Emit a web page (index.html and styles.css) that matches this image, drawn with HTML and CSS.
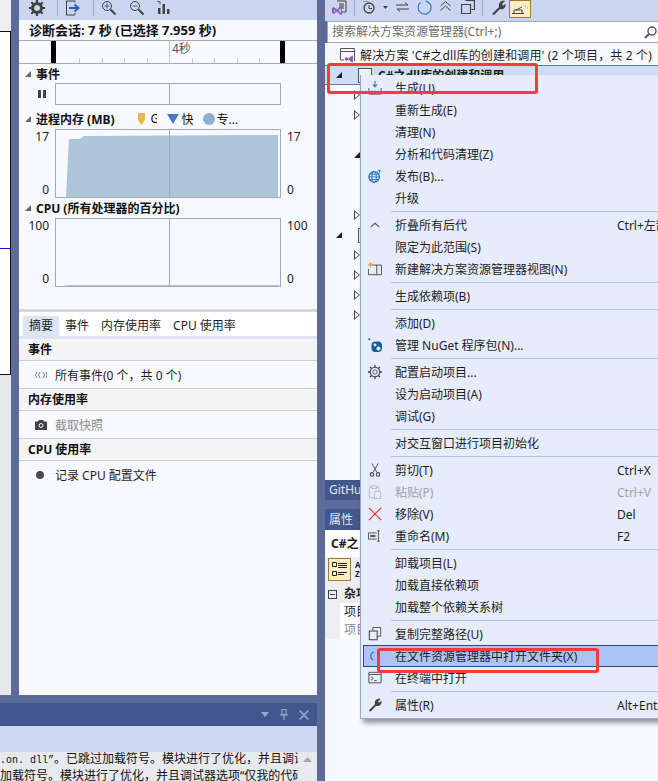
FILE: index.html
```html
<!DOCTYPE html>
<html lang="zh-CN">
<head>
<meta charset="UTF-8">
<meta name="viewport" content="width=device-width, initial-scale=1.0">
<title>解决方案资源管理器</title>
<link rel="stylesheet" href="styles.css">
</head>
<body>
<div class="app">

    <!-- 左侧：诊断工具 + 输出 -->
    <div class="left-col">
        <div class="left-top">
            <div class="doc">
                <div class="doc-tab"></div>
                <div class="doc-page"><div class="doc-mark"></div></div>
                <div class="doc-rest"></div>
            </div>
            <div class="diag">
                <div class="toolbar diag-toolbar">
                    <svg class="ic ic-gear" width="16" height="16" viewBox="0 0 16 16"><circle cx="8" cy="8" r="4.5" fill="none" stroke="#424242" stroke-width="3"/><path d="M8 0v3M8 13v3M0 8h3M13 8h3M2.3 2.3l2 2M11.7 11.7l2 2M2.3 13.7l2-2M11.7 4.3l2-2" stroke="#424242" stroke-width="2.2"/></svg>
                    <span class="tool-sep"></span>
                    <svg class="ic ic-export" width="16" height="16" viewBox="0 0 16 16"><path d="M10 2.5V1H1.500v14H10v-2" fill="none" stroke="#424242"/><path d="M4 8h9M9.500 4.500L13.500 8l-4 3.500" fill="none" stroke="#2f5fb0" stroke-width="2"/></svg>
                    <span class="tool-sep"></span>
                    <svg class="ic ic-zoomin" width="16" height="16" viewBox="0 0 16 16"><circle cx="6" cy="6" r="4.500" fill="none" stroke="#424242"/><path d="M9.500 9.500l5 5" stroke="#424242" stroke-width="2"/><path d="M3.500 6h5M6 3.500v5" stroke="#2f5fb0"/></svg>
                    <svg class="ic ic-zoomout" width="16" height="16" viewBox="0 0 16 16"><circle cx="6" cy="6" r="4.500" fill="none" stroke="#424242"/><path d="M9.500 9.500l5 5" stroke="#424242" stroke-width="2"/><path d="M3.500 6h5" stroke="#2f5fb0"/></svg>
                    <svg class="ic ic-chart" width="16" height="16" viewBox="0 0 16 16"><path d="M2 14V8h2.500v6zM6.500 14V4H9v10zM11 14V9h2.500v5z" fill="#424242"/><path d="M1 1.500h3v3" fill="none" stroke="#2f5fb0"/></svg>
                </div>
                <div class="session">诊断会话: 7 秒 (已选择 7.959 秒)</div>
                <div class="ruler">
                    <span class="ruler-mark ruler-start"></span>
                    <span class="ruler-mid">4秒</span>
                    <span class="ruler-mark ruler-end"></span>
                    <div class="ruler-ticks">
                        <i></i><i></i><i></i><i></i><i></i><i></i><i></i><i></i><i></i>
                    </div>
                </div>

                <div class="graph-head events-head"><span class="tri"></span><span>事件</span></div>
                <div class="graph-row events-row">
                    <div class="axis"><span class="pause"></span></div>
                    <div class="chart"></div>
                </div>

                <div class="graph-head mem-head">
                    <span class="tri"></span><span>进程内存 (MB)</span>
                    <div class="legend">
                        <svg width="7" height="12" viewBox="0 0 7 12"><path d="M0 0h7v7l-3.500 5L0 7z" fill="#eeb64b"/></svg>
                        <span class="legend-g">G</span>
                        <svg width="12" height="10" viewBox="0 0 12 10"><path d="M0 0h12L6 10z" fill="#4a78c0"/></svg>
                        <span class="legend-fast">快</span>
                        <span class="legend-dot"></span>
                        <span>专...</span>
                    </div>
                </div>
                <div class="graph-row tall-row">
                    <div class="axis"><span>17</span><span>0</span></div>
                    <div class="chart">
                        <svg class="chart-fill" width="224" height="67" viewBox="0 0 224 67"><path d="M10 67L13 9H24L28 6L222 5V67Z" fill="#adc4d9"/></svg>
                    </div>
                    <div class="axis axis-right"><span>17</span><span>0</span></div>
                </div>

                <div class="graph-head cpu-head"><span class="tri"></span><span>CPU (所有处理器的百分比)</span></div>
                <div class="graph-row tall-row">
                    <div class="axis"><span>100</span><span>0</span></div>
                    <div class="chart">
                        <svg class="chart-fill" width="224" height="67" viewBox="0 0 224 67"><path d="M10 67V66H223V67Z" fill="#adc4d9"/></svg>
                    </div>
                    <div class="axis axis-right"><span>100</span><span>0</span></div>
                </div>

                <div class="splitter"></div>
                <div class="tabs">
                    <span class="tab tab-on">摘要</span>
                    <span class="tab">事件</span>
                    <span class="tab">内存使用率</span>
                    <span class="tab">CPU 使用率</span>
                </div>
                <div class="sum-head">事件</div>
                <div class="sum-row">
                    <svg class="sum-ic" width="12" height="8" viewBox="0 0 12 8"><path d="M2 1L0.500 4L2 7M5 1L3.500 4L5 7M8 1L9.500 4L8 7M11 1L12 4L11 7" fill="none" stroke="#777"/></svg>
                    <span>所有事件(0 个，共 0 个)</span>
                </div>
                <div class="sum-head">内存使用率</div>
                <div class="sum-row sum-off">
                    <svg class="sum-ic" width="12" height="10" viewBox="0 0 12 10"><path d="M0 1.500h3l1-1.500h4l1 1.500h3V10H0z" fill="#424242"/><circle cx="6" cy="5.500" r="2" fill="none" stroke="#f7f9ff"/></svg>
                    <span>截取快照</span>
                </div>
                <div class="sum-head">CPU 使用率</div>
                <div class="sum-row">
                    <span class="rec-dot"></span>
                    <span>记录 CPU 配置文件</span>
                </div>
            </div>
        </div>

        <!-- 输出窗口 -->
        <div class="output">
            <div class="title-bar">
                <svg width="8" height="5" viewBox="0 0 8 5"><path d="M0 0h8L4 5z" fill="#9aa7cc"/></svg>
                <svg width="8" height="11" viewBox="0 0 8 11"><path d="M2 .5h4v5H2zM0 6h8M4 6v5" fill="none" stroke="#9aa7cc" stroke-width="1.200"/></svg>
                <svg width="10" height="10" viewBox="0 0 10 10"><path d="M.5.500l9 9M9.500.500l-9 9" stroke="#9aa7cc" stroke-width="1.500"/></svg>
            </div>
            <div class="output-bar"></div>
            <div class="output-body">
                <div class="output-text">
                    <div><span class="mono">.on. dll”</span>。已跳过加载符号。模块进行了优化，并且调试器选项</div>
                    <div>加载符号。模块进行了优化，并且调试器选项“仅我的代码”已启用</div>
                </div>
                <svg class="scroll-up" width="9" height="5" viewBox="0 0 9 5"><path d="M0 5L4.500 0L9 5z" fill="#a5a7ad"/></svg>
            </div>
        </div>
    </div>

    <!-- 右侧：解决方案资源管理器 + 属性 -->
    <div class="right-col">
        <div class="toolbar se-toolbar">
            <svg class="se-vs" width="16" height="16" viewBox="0 0 16 16"><path d="M5 1h9v11H9" fill="none" stroke="#424242"/><path d="M7 4h5M7 6h5M7 8h5" stroke="#424242"/><path d="M0 8l2-1 3 2.500L9 6l1 .500v8l-1 .500-4-3.500L2 14l-2-1zM2 9v3l1.500-1.500zM9 8l-2.500 2.500L9 13z" fill="#8a5cc0"/></svg>
            <span class="tool-sep"></span>
            <svg width="12" height="13" viewBox="0 0 12 13" class="se-clock"><circle cx="6" cy="7" r="5" fill="none" stroke="#424242" stroke-width="1.300"/><path d="M6 4v3.500h3" fill="none" stroke="#424242"/><path d="M0 0h5" stroke="#2f5fb0"/></svg>
            <svg width="5" height="3" viewBox="0 0 5 3" class="se-caret"><path d="M0 0h5L2.500 3z" fill="#424242"/></svg>
            <svg width="13" height="10" viewBox="0 0 13 10" class="se-swap"><path d="M0 3h12M9 .500L12 3M13 7H1M4 9.500L1 7" fill="none" stroke="#424242"/></svg>
            <svg width="15" height="15" viewBox="0 0 15 15" class="se-sync"><path d="M8.500 1.100A6.500 6.500 0 1 1 3.500 2.500" fill="none" stroke="#2f7fc4" stroke-width="1.200"/></svg>
            <svg width="11" height="10" viewBox="0 0 11 10" class="se-up"><path d="M.5 5l5-4.500 5 4.500M.5 9.500l5-4.500 5 4.500" fill="none" stroke="#424242"/></svg>
            <svg width="14" height="14" viewBox="0 0 14 14" class="se-copy"><path d="M4.500.5h9v9h-3M.5 4.500h9v9h-9z" fill="none" stroke="#424242" stroke-width="1.200"/></svg>
            <span class="tool-sep se-sep2"></span>
            <svg width="15" height="15" viewBox="0 0 15 15" class="se-wrench"><path d="M1 14L8 7C7 3 10 0 14 1L11 4l1 1.500L14.500 4C15 8 12 10 9 9L3 15z" fill="#424242"/></svg>
            <span class="tool-on"><svg width="16" height="9" viewBox="0 0 16 9"><path d="M0 8.500h12M2 8V5h8v3M4 5l6-3" fill="none" stroke="#424242"/><path d="M13 1h1M15 3h1" stroke="#c09030"/></svg></span>
        </div>
        <div class="search">
            <span>搜索解决方案资源管理器(Ctrl+;)</span>
            <svg width="13" height="13" viewBox="0 0 13 13"><circle cx="8" cy="5" r="4" fill="none" stroke="#555" stroke-width="1.500"/><path d="M5 8l-4 4" stroke="#555" stroke-width="2"/></svg>
        </div>
        <div class="tree">
            <div class="tree-row tree-sol">
                <svg width="15" height="15" viewBox="0 0 15 15"><path d="M4 12H.5V.500h14V13" fill="none" stroke="#555"/><path d="M1 3.500h13" stroke="#555"/><path d="M5 10l1.500-1 2 1.500L12 7.500l1 .500v6l-1 .500-3.500-3-2 1.500L5 12z" fill="#8a5cc0"/></svg>
                <span class="sol-name">解决方案 'C#之dll库的创建和调用' (2 个项目，共 2 个)</span>
            </div>
            <div class="tree-row tree-project">
                <span class="arrow-open"></span>
                <span class="proj-ic"></span>
                <b>C#之dll库的创建和调用</b>
            </div>
            <div class="tree-row lvl2"><span class="arrow-closed"></span></div>
            <div class="tree-row lvl2"><span class="arrow-closed"></span></div>
            <div class="tree-row"></div>
            <div class="tree-row lvl2"><span class="arrow-open"></span></div>
            <div class="tree-row"></div>
            <div class="tree-row"></div>
            <div class="tree-row lvl2"><span class="arrow-closed"></span></div>
            <div class="tree-row"><span class="arrow-open"></span><span class="proj-ic"></span></div>
            <div class="tree-row lvl2"><span class="arrow-closed"></span></div>
            <div class="tree-row lvl2"><span class="arrow-closed"></span></div>
            <div class="tree-row lvl2"><span class="arrow-closed"></span></div>
            <div class="tree-row lvl2"><span class="arrow-closed"></span></div>
        </div>
        <div class="pane-tab">GitHu</div>
        <div class="pane-gap"></div>
        <div class="pane-tab prop-tab">属性</div>
        <div class="prop-name">C#之</div>
        <div class="prop-tools">
            <span class="tool-on prop-on"><svg width="15" height="15" viewBox="0 0 15 15"><path d="M.5.500h4v4h-4zM.5 9.500h4v4h-4z" fill="none" stroke="#222"/><path d="M6 1.500h9M6 3.500h9M6 5.500h9M6 10.500h9M6 12.500h6" stroke="#222"/></svg></span>
            <span class="prop-az">A<br>Z</span>
        </div>
        <div class="prop-list">
            <div class="prop-row prop-cat"><span class="gutter"><span class="minus"></span></span><b class="prop-val">杂项</b></div>
            <div class="prop-row"><span class="gutter"></span><span class="prop-val">项目</span></div>
            <div class="prop-row prop-dim"><span class="gutter"></span><span class="prop-val">项目</span></div>
        </div>
        <div class="prop-rest"></div>
    </div>

    <!-- 右键菜单 -->
    <div class="menu">
        <div class="menu-item">
            <svg class="menu-ic" viewBox="0 0 16 16"><path d="M8 0v6M5.500 4L8 6.500 10.500 4" fill="none" stroke="#2f7fc4" stroke-width="1.300"/><path d="M1 8v7h14V8" fill="none" stroke="#424242"/><path d="M4 11h2v2H4zM7 11h2v2H7zM10 11h2v2h-2z" fill="#424242"/></svg>
            <span>生成(U)</span>
        </div>
        <div class="menu-item"><span>重新生成(E)</span></div>
        <div class="menu-item"><span>清理(N)</span></div>
        <div class="menu-item"><span>分析和代码清理(Z)</span></div>
        <div class="menu-item">
            <svg class="menu-ic" viewBox="0 0 16 16"><circle cx="7" cy="9" r="6" fill="none" stroke="#1f6fb5" stroke-width="1.400"/><ellipse cx="7" cy="9" rx="2.500" ry="6" fill="none" stroke="#1f6fb5"/><path d="M1 9h12M2 6h10M2 12h10" stroke="#1f6fb5"/><path d="M13 5V1M11 3l2-2 2 2" fill="none" stroke="#1f6fb5"/></svg>
            <span>发布(B)...</span>
        </div>
        <div class="menu-item"><span>升级</span></div>
        <div class="menu-sep"></div>
        <div class="menu-item">
            <svg class="menu-ic" viewBox="0 0 16 16"><path d="M3 10.500L8 6l5 4.500" fill="none" stroke="#555" stroke-width="1.200"/></svg>
            <span>折叠所有后代</span><span class="key">Ctrl+左箭头</span>
        </div>
        <div class="menu-item"><span>限定为此范围(S)</span></div>
        <div class="menu-item">
            <svg class="menu-ic" viewBox="0 0 16 16"><path d="M5 3.500h10.500v11H.5V8" fill="none" stroke="#424242"/><path d="M10 3.500v11" stroke="#424242"/><path d="M3 0v6M0 3h6M1 1l4 4M5 1L1 5" stroke="#d9a030"/></svg>
            <span>新建解决方案资源管理器视图(N)</span>
        </div>
        <div class="menu-sep"></div>
        <div class="menu-item"><span>生成依赖项(B)</span></div>
        <div class="menu-sep"></div>
        <div class="menu-item"><span>添加(D)</span></div>
        <div class="menu-item">
            <svg class="menu-ic" viewBox="0 0 16 16"><rect x="4" y="4" width="12" height="12" rx="4.500" fill="#0f5f94"/><circle cx="1.500" cy="1.500" r="1.200" fill="#0f5f94"/><circle cx="8" cy="8" r="1.700" fill="#e6ecfb"/><circle cx="12" cy="12" r="2.300" fill="#e6ecfb"/></svg>
            <span>管理 NuGet 程序包(N)...</span>
        </div>
        <div class="menu-sep"></div>
        <div class="menu-item">
            <svg class="menu-ic" viewBox="0 0 16 16"><circle cx="8" cy="8" r="2.500" fill="none" stroke="#424242"/><circle cx="8" cy="8" r="5.500" fill="none" stroke="#424242" stroke-width="1.200"/><path d="M8 0v2.500M8 13.500V16M0 8h2.500M13.500 8H16M2.300 2.300l1.800 1.800M11.900 11.900l1.800 1.800M2.300 13.700l1.800-1.800M11.900 4.100l1.800-1.800" stroke="#424242" stroke-width="1.500"/></svg>
            <span>配置启动项目...</span>
        </div>
        <div class="menu-item"><span>设为启动项目(A)</span></div>
        <div class="menu-item"><span>调试(G)</span></div>
        <div class="menu-sep"></div>
        <div class="menu-item"><span>对交互窗口进行项目初始化</span></div>
        <div class="menu-sep"></div>
        <div class="menu-item">
            <svg class="menu-ic" viewBox="0 0 16 16"><path d="M4.500 0.500L10 10.500M11.500 0.500L6 10.500" stroke="#424242"/><circle cx="4.500" cy="13" r="2" fill="none" stroke="#424242" stroke-width="1.200"/><circle cx="11.500" cy="13" r="2" fill="none" stroke="#424242" stroke-width="1.200"/></svg>
            <span>剪切(T)</span><span class="key">Ctrl+X</span>
        </div>
        <div class="menu-item menu-off">
            <svg class="menu-ic" viewBox="0 0 16 16"><path d="M4 2.500H1.500v12H7M10 2.500h2.500V7M4 1h6v3H4zM7.500 7.500h7v8h-7z" fill="none" stroke="#b4b6bc"/></svg>
            <span>粘贴(P)</span><span class="key">Ctrl+V</span>
        </div>
        <div class="menu-item">
            <svg class="menu-ic" viewBox="0 0 16 16"><path d="M1 1l14 14M15 1L1 15" stroke="#e0303f" stroke-width="1.300"/></svg>
            <span>移除(V)</span><span class="key">Del</span>
        </div>
        <div class="menu-item">
            <svg class="menu-ic" viewBox="0 0 16 16"><path d="M10 4.500H.5v7H10" fill="none" stroke="#424242"/><path d="M2.500 8h6" stroke="#424242" stroke-width="2"/><path d="M10.500 2h3M12 2v12M10.500 14h3" fill="none" stroke="#424242"/></svg>
            <span>重命名(M)</span><span class="key">F2</span>
        </div>
        <div class="menu-sep"></div>
        <div class="menu-item"><span>卸载项目(L)</span></div>
        <div class="menu-item"><span>加载直接依赖项</span></div>
        <div class="menu-item"><span>加载整个依赖关系树</span></div>
        <div class="menu-sep"></div>
        <div class="menu-item">
            <svg class="menu-ic" viewBox="0 0 16 16"><path d="M5.500 4V.5h9v10H11" fill="none" stroke="#424242"/><path d="M1.500 4.500h9v10h-9z" fill="none" stroke="#424242" stroke-width="1.200"/></svg>
            <span>复制完整路径(U)</span>
        </div>
        <div class="menu-item menu-hover">
            <svg class="menu-ic" viewBox="0 0 16 16"><path d="M7 3.500A5 5 0 0 0 3 8a5 5 0 0 0 3 4.500" fill="none" stroke="#1f6fb5" stroke-width="1.200"/></svg>
            <span>在文件资源管理器中打开文件夹(X)</span>
        </div>
        <div class="menu-item">
            <svg class="menu-ic" viewBox="0 0 16 16"><path d="M1 1.500h14v12H1z" fill="none" stroke="#424242"/><path d="M1 4h14" stroke="#424242"/><path d="M3.500 6.500L6 8.500 3.500 10.500M7 11h3" fill="none" stroke="#424242"/></svg>
            <span>在终端中打开</span>
        </div>
        <div class="menu-sep"></div>
        <div class="menu-item">
            <svg class="menu-ic" viewBox="0 0 16 16"><path d="M1 14L8 7C7 3 10 0 14.500 1L11.500 4l1 1.500L15.500 3C16 8 12 10 9 9L3 15.500z" fill="#424242"/></svg>
            <span>属性(R)</span><span class="key">Alt+Enter</span>
        </div>
    </div>

    <!-- 截图上的红框标注 -->
    <div class="mark mark-build"></div>
    <div class="mark mark-open"></div>
</div>
</body>
</html>
```

FILE: styles.css
```css
html, body {
    margin: 0;
    padding: 0;
}
body {
    font-family: "Noto Sans", "Noto Sans CJK SC", sans-serif;
    font-size: 12px;
    color: #1e1e1e;
}
.app {
    position: relative;
    display: flex;
    width: 658px;
    height: 781px;
    overflow: hidden;
    background: #5d6b99;
}
/* 左列 */
.left-col {
    width: 317px;
    margin-right: 8px;
    display: flex;
    flex-direction: column;
    flex-shrink: 0;
}
.left-top {
    display: flex;
    height: 695px;
    gap: 8px;
}
.doc {
    width: 11px;
    display: flex;
    flex-direction: column;
}
.doc-tab {
    height: 31px;
    background: #eeeef3;
}
.doc-page {
    height: 342px;
    width: 10px;
    background: #fff;
    border-top: 1px solid #111;
    border-right: 1px solid #111;
    border-bottom: 1px solid #111;
}
.doc-mark {
    height: 1px;
    margin-top: 216px;
    background: #1010d0;
}
.doc-rest {
    flex: 1;
    background: #e7e8ec;
}
.diag {
    width: 298px;
    background: #f8f9ff;
}
.toolbar {
    height: 20px;
    background: #ccd5f0;
    display: flex;
    align-items: center;
}
.diag-toolbar {
    padding-left: 10px;
}
.ic {
    margin-top: -4px;
}
.tool-sep {
    width: 1px;
    height: 16px;
    margin-top: -4px;
    background: #9fa9c4;
}
.diag-toolbar .tool-sep { margin-left: 12px; }
.ic-export { margin-left: 7px; }
.ic-zoomin { margin-left: 7px; }
.ic-zoomout { margin-left: 12px; }
.ic-chart { margin-left: 11px; }
.session {
    height: 20px;
    line-height: 20px;
    padding-left: 10px;
    font-size: 13px;
    font-weight: 700;
    color: #111;
    white-space: nowrap;
}
.ruler {
    position: relative;
    height: 22px;
    border-top: 1px solid #a0aabd;
    border-bottom: 1px solid #a0aabd;
}
.ruler-mark {
    position: absolute;
    top: 0;
    width: 5px;
    height: 22px;
    background: #000;
}
.ruler-start { left: 32px; }
.ruler-end { left: 261px; }
.ruler-mid {
    position: absolute;
    left: 150px;
    top: 0;
    height: 22px;
    border-left: 1px solid #c4c9d4;
    padding-left: 2px;
    line-height: 15px;
    color: #555;
}
.ruler-ticks {
    display: flex;
    gap: 21.500px;
    position: absolute;
    left: 60px;
    bottom: 0;
}
.ruler-ticks i {
    display: block;
    width: 1px;
    height: 5px;
    background: #c4c9d4;
}
.graph-head {
    display: flex;
    align-items: center;
    height: 20px;
    padding-left: 6px;
    font-weight: 700;
    color: #111;
    gap: 5px;
    white-space: nowrap;
}
.events-head {
    height: 19px;
}
.tri {
    width: 0;
    height: 0;
    border-style: solid;
    border-width: 0 0 6px 6px;
    border-color: transparent transparent #666 transparent;
}
.graph-row {
    display: flex;
}
.axis {
    width: 30px;
    margin-right: 6px;
    display: flex;
    flex-direction: column;
    justify-content: space-between;
    align-items: flex-end;
    line-height: 16px;
    color: #222;
}
.axis-right {
    margin: 0 0 0 6px;
    align-items: flex-start;
}
.chart {
    position: relative;
    width: 224px;
    border: 1px solid #a0aabd;
    background: #f8f9ff;
}
.chart::after {
    content: "";
    position: absolute;
    left: 113px;
    top: 0;
    bottom: 0;
    width: 1px;
    background: #a0aabd;
}
.chart-fill {
    display: block;
}
.events-row {
    height: 22px;
}
.events-row .axis {
    justify-content: center;
    align-items: center;
    padding-left: 15px;
    width: 15px;
}
.pause {
    width: 2px;
    height: 8px;
    border-left: 3px solid #444;
    border-right: 3px solid #444;
}
.tall-row {
    height: 69px;
}
.mem-head {
    margin-top: 3px;
    height: 21px;
}
.legend {
    display: flex;
    align-items: center;
    margin-left: 18px;
    font-weight: 400;
}
.legend-g {
    width: 6px;
    overflow: hidden;
    margin: 0 10px 0 6px;
}
.legend-fast { margin: 0 9px 0 3px; }
.legend-dot {
    width: 12px;
    height: 12px;
    margin-right: 2px;
    border-radius: 50%;
    background: #8fb0c9;
}
.splitter {
    height: 3px;
    margin-top: 22px;
    background: #d5d7e0;
}
.tabs {
    display: flex;
    height: 20px;
    padding: 4px 0 0 4px;
    background: #fff;
    border-bottom: 3px solid #dde3f3;
}
.tab {
    padding: 0 6px;
    line-height: 20px;
    color: #1e1e1e;
    white-space: nowrap;
}
.tab-on {
    background: #dde4f4;
}
.sum-head {
    height: 21px;
    line-height: 21px;
    padding-left: 9px;
    font-weight: 700;
    background: #f5f5f5;
    border-bottom: 1px solid #c9ccd9;
    color: #111;
}
.sum-row {
    display: flex;
    align-items: center;
    height: 27px;
    border-bottom: 1px solid #c9ccd9;
    padding-left: 16px;
}
.sum-row:last-child {
    border-bottom: 0;
}
.sum-ic {
    margin-right: 8px;
}
.sum-off {
    color: #8a8a8a;
}
.rec-dot {
    width: 8px;
    height: 8px;
    margin: 0 11px 0 1px;
    border-radius: 50%;
    background: #4a4a4a;
}
/* 输出窗口 */
.output {
    margin-top: 8px;
    flex: 1;
    display: flex;
    flex-direction: column;
    min-height: 0;
}
.title-bar {
    height: 23px;
    background: #41578e;
    display: flex;
    align-items: center;
    justify-content: flex-end;
    gap: 11px;
    padding-right: 8px;
}
.output-bar {
    height: 26px;
    background: #cdd7f0;
}
.output-body {
    flex: 1;
    display: flex;
    background: #e8e9ec;
    overflow: hidden;
}
.output-text {
    width: 298px;
    flex-shrink: 0;
    margin-top: -1px;
    overflow: hidden;
    white-space: nowrap;
    line-height: 15px;
    color: #111;
}
.mono {
    font-family: "Liberation Mono", monospace;
    font-size: 10px;
}
.scroll-up {
    margin: 5px 0 0 5px;
}
/* 右列 */
.right-col {
    width: 333px;
    flex-shrink: 0;
    display: flex;
    flex-direction: column;
}
.se-toolbar {
    padding-left: 4px;
    align-items: flex-start;
    height: 21px;
}
.se-vs { margin: 0 0 0 3px; }
.se-toolbar .tool-sep { margin: 0 0 0 6px; }
.se-clock { margin: 1px 0 0 8px; }
.se-caret { margin: 6px 0 0 8px; }
.se-swap { margin: 2px 0 0 8px; }
.se-sync { margin: 0 0 0 8px; }
.se-up { margin: 1px 0 0 8px; }
.se-copy { margin: 0 0 0 10px; }
.se-toolbar .se-sep2 { margin-left: 7px; }
.se-wrench { margin: 0 0 0 8px; }
.tool-on {
    display: flex;
    align-items: center;
    justify-content: center;
    width: 20px;
    height: 16px;
    margin-left: 3px;
    background: #ffedc8;
    border: 1px solid #a5793a;
}
.search {
    display: flex;
    justify-content: space-between;
    align-items: center;
    height: 20px;
    margin-left: 2px;
    padding-left: 4px;
    background: #fff;
    border: 1px solid #9fa8bd;
    border-right: 0;
    color: #6d6d6d;
    line-height: 20px;
}
.search svg { margin-right: 1px; }
.tree {
    height: 437px;
    box-sizing: border-box;
    background: #f8f9ff;
    padding-top: 2px;
}
.tree-row {
    display: flex;
    align-items: center;
    height: 20px;
    padding-left: 11px;
    white-space: nowrap;
}
.tree-sol {
    padding-left: 15px;
    gap: 5px;
}
.sol-name {
    letter-spacing: .15px;
}
.tree-project {
    height: 18px;
    background: #cfdcf6;
    border-top: 1px solid #5b7cb8;
    border-bottom: 1px solid #5b7cb8;
}
.tree-project b {
    margin-left: 6px;
}
.lvl2 {
    padding-left: 29px;
}
.arrow-open {
    width: 0;
    height: 0;
    border-style: solid;
    border-width: 0 0 6px 6px;
    border-color: transparent transparent #222 transparent;
}
.arrow-closed {
    position: relative;
    width: 0;
    height: 0;
    border-top: 5px solid transparent;
    border-bottom: 5px solid transparent;
    border-left: 6px solid #444;
}
.arrow-closed::after {
    content: "";
    position: absolute;
    left: -5px;
    top: -3px;
    border-top: 3px solid transparent;
    border-bottom: 3px solid transparent;
    border-left: 4px solid #f8f9ff;
}
.proj-ic {
    width: 12px;
    height: 13px;
    margin-left: 16px;
    border: 1px solid #555;
    background: #eef3ea;
}
.pane-tab {
    height: 20px;
    line-height: 20px;
    padding-left: 4px;
    background: #41578e;
    color: #dfe5f5;
}
.pane-gap {
    height: 9px;
}
.prop-tab {
    height: 21px;
    line-height: 21px;
}
.prop-name {
    height: 27px;
    line-height: 27px;
    padding-left: 6px;
    background: #fff;
    font-weight: 700;
}
.prop-tools {
    display: flex;
    height: 28px;
    background: #eeeef6;
    padding-left: 3px;
    box-sizing: border-box;
}
.prop-on {
    width: 21px;
    height: 21px;
    margin: 1px 4px 0 0;
}
.prop-az {
    font-size: 8px;
    line-height: 9px;
    font-weight: 700;
    padding-top: 3px;
}
.prop-row {
    display: flex;
    height: 18px;
    line-height: 18px;
    background: #fff;
}
.prop-row .gutter {
    width: 15px;
    background: #eeeef2;
    display: flex;
    align-items: center;
    justify-content: center;
}
.prop-cat {
    background: #eeeef2;
}
.prop-val { padding-left: 4px; }
.prop-dim { color: #8a8a8a; }
.minus {
    width: 7px;
    height: 7px;
    border: 1px solid #444;
    background: linear-gradient(#444, #444) center / 5px 1px no-repeat;
}
.prop-rest {
    flex: 1;
    background: #f8f9ff;
}
/* 右键菜单 */
.menu {
    position: absolute;
    left: 360px;
    top: 75px;
    width: 330px;
    padding: 2px 0;
    background: #e6ecfb;
    border-left: 1px solid #9aa6c8;
    border-bottom: 1px solid #9aa6c8;
    box-sizing: border-box;
    box-shadow: 3px 4px 5px rgba(0, 0, 0, 0.4);
}
.menu-item {
    display: flex;
    align-items: center;
    height: 22px;
    padding-left: 34px;
    position: relative;
    white-space: nowrap;
}
.menu-ic {
    position: absolute;
    left: 7px;
    top: 4px;
    width: 14px;
    height: 14px;
}
.key {
    position: absolute;
    left: 256px;
}
.menu-sep {
    height: 1px;
    margin: 2px 0 2px 30px;
    background: #b8c4e2;
}
.menu-off {
    color: #a2a4a8;
}
.menu-hover {
    margin-left: 2px;
    padding-left: 31px;
    height: 20px;
    background: #adc3f5;
    border: 1px solid #2d4a8a;
    border-right: 0;
}
.menu-hover .menu-ic {
    left: 4px;
    top: 3px;
}
/* 红框 */
.mark {
    position: absolute;
    border: 3px solid #f93a3c;
    border-radius: 3px;
    box-sizing: border-box;
}
.mark-build {
    left: 327px;
    top: 63px;
    width: 211px;
    height: 31px;
}
.mark-open {
    left: 377px;
    top: 648px;
    width: 222px;
    height: 25px;
}
```
